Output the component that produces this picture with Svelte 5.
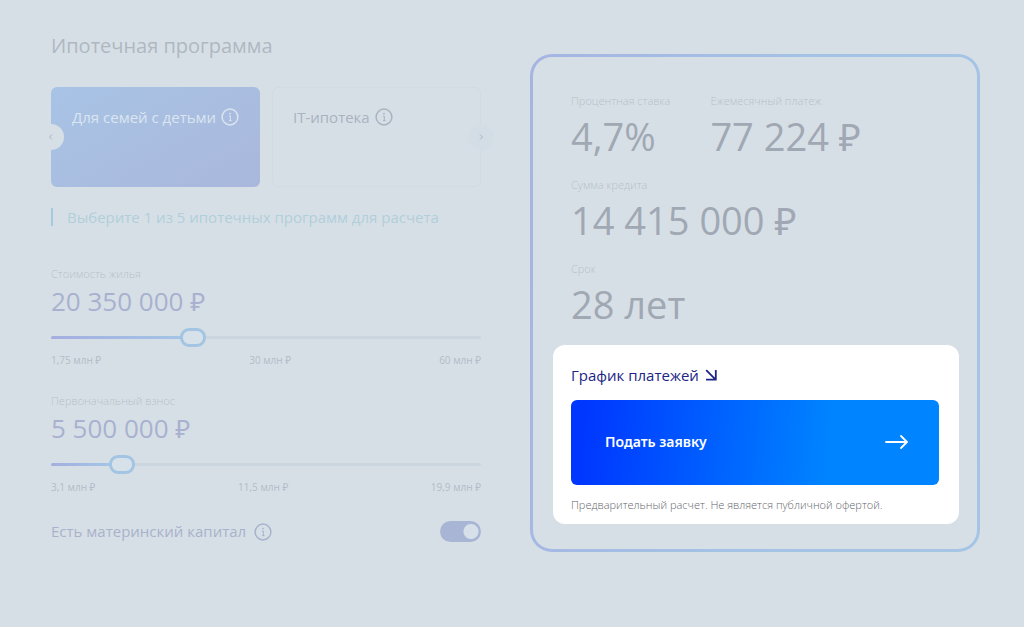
<script>
  const programs = [
    { id: 'family', name: 'Для семей с детьми' },
    { id: 'it', name: 'IT-ипотека' }
  ];

  const results = [
    [
      { label: 'Процентная ставка', value: '4,7%' },
      { label: 'Ежемесячный платеж', value: '77 224 ₽' }
    ],
    [{ label: 'Сумма кредита', value: '14 415 000 ₽' }],
    [{ label: 'Срок', value: '28 лет' }]
  ];

  let selected = $state('family');
  let capital = $state(true);
  let fields = $state([
    {
      id: 'price',
      label: 'Стоимость жилья',
      min: 1750000,
      max: 60000000,
      value: 20350000,
      ticks: ['1,75 млн ₽', '30 млн ₽', '60 млн ₽']
    },
    {
      id: 'deposit',
      label: 'Первоначальный взнос',
      min: 3100000,
      max: 19900000,
      value: 5500000,
      ticks: ['3,1 млн ₽', '11,5 млн ₽', '19,9 млн ₽']
    }
  ]);

  // 20350000 → "20 350 000 ₽"
  function formatPrice(n) {
    return String(n).replace(/\B(?=(\d{3})+$)/g, ' ') + ' ₽';
  }

  function fillPercent(field) {
    return ((field.value - field.min) / (field.max - field.min)) * 100;
  }
</script>

{#snippet infoIcon()}
  <svg class="info" viewBox="0 0 18 18" aria-hidden="true">
    <circle cx="9" cy="9" r="7.9" fill="none" stroke="currentColor" stroke-width="1.5" />
    <path d="M8 8H9.3V13M8 12.7H10.6" fill="none" stroke="currentColor" stroke-width="1" />
    <circle cx="9" cy="5.6" r="0.9" fill="currentColor" />
  </svg>
{/snippet}

<main class="calculator">
  <section class="settings">
    <h2>Ипотечная программа</h2>

    <div class="carousel">
      {#each programs as program (program.id)}
        <button
          class="program"
          class:active={selected === program.id}
          onclick={() => (selected = program.id)}
        >
          <span>{program.name}</span>
          {@render infoIcon()}
        </button>
      {/each}
      <button class="arrow prev" aria-label="Назад">
        <svg viewBox="0 0 8 8"><path d="M5 1.5L2.5 4L5 6.5" /></svg>
      </button>
      <button class="arrow next" aria-label="Вперед">
        <svg viewBox="0 0 8 8"><path d="M3 1.5L5.5 4L3 6.5" /></svg>
      </button>
    </div>

    <p class="hint">Выберите 1 из 5 ипотечных программ для расчета</p>

    {#each fields as field (field.id)}
      <div class="field">
        <label class="caption" for={field.id}>{field.label}</label>
        <output class="amount" for={field.id}>{formatPrice(field.value)}</output>
        <input
          id={field.id}
          type="range"
          min={field.min}
          max={field.max}
          step="50000"
          bind:value={field.value}
          style="--fill: {fillPercent(field)}%"
        />
        <div class="ticks">
          {#each field.ticks as tick}
            <span>{tick}</span>
          {/each}
        </div>
      </div>
    {/each}

    <div class="capital">
      <label for="capital">Есть материнский капитал</label>
      {@render infoIcon()}
      <input id="capital" type="checkbox" bind:checked={capital} />
    </div>
  </section>

  <section class="summary">
    {#each results as row}
      <div class="row">
        {#each row as item}
          <div>
            <div class="caption">{item.label}</div>
            <div class="result">{item.value}</div>
          </div>
        {/each}
      </div>
    {/each}

    <div class="actions">
      <a class="schedule" href="#schedule">
        График платежей
        <svg viewBox="0 0 12 12" aria-hidden="true">
          <path d="M1.2 1.2L10.4 10.4M10.8 1V10.6H1" />
        </svg>
      </a>
      <button class="submit">
        <span>Подать заявку</span>
        <svg viewBox="0 0 24 16" aria-hidden="true">
          <path d="M1 8H22M16 2L22 8L16 14" />
        </svg>
      </button>
      <p class="note">Предварительный расчет. Не является публичной офертой.</p>
    </div>
  </section>
</main>

<style>
  :global(body) {
    margin: 0;
    background: #d7dfe6;
  }

  .calculator {
    display: grid;
    grid-template-columns: 430fr 450fr;
    align-items: start;
    gap: 49px;
    padding: 34px 44px 34px 51px;
    font-family: 'Open Sans', 'Noto Sans', sans-serif;
    color: #a4adb8;
  }

  button,
  input {
    margin: 0;
    font-family: inherit;
  }

  button {
    border: 0;
    cursor: pointer;
  }

  h2 {
    margin: 0 0 29px;
    font-size: 20px;
    font-weight: 400;
    line-height: 24px;
    color: #afb8c1;
  }

  /* Program cards */
  .carousel {
    position: relative;
    display: grid;
    grid-template-columns: repeat(2, minmax(0, 1fr));
    gap: 12px;
  }

  .program {
    display: flex;
    align-items: flex-start;
    gap: 5px;
    height: 100px;
    padding: 19px 20px;
    border: 1px solid #d1dbe3;
    border-radius: 6px;
    background: transparent;
    font-size: 15px;
    line-height: 20px;
    color: #a9b2bf;
    white-space: nowrap;
  }

  .program.active {
    border-color: transparent;
    background: linear-gradient(150deg, #a7c3e6, #a9bfe1 40%, #a9b7dc) border-box;
    color: #dae5f0;
  }

  .info {
    flex-shrink: 0;
    width: 18px;
    height: 18px;
    margin-top: 1px;
  }

  .arrow {
    position: absolute;
    top: 50%;
    display: flex;
    align-items: center;
    justify-content: center;
    width: 26px;
    height: 26px;
    padding: 0;
    border-radius: 50%;
    background: #d7dfe6;
    transform: translateY(-50%);
  }

  .prev {
    left: -13px;
  }

  .next {
    right: -13px;
    background: #d3dde6;
  }

  .arrow svg {
    width: 8px;
    height: 8px;
    fill: none;
    stroke: #a9b4c2;
    stroke-width: 1;
  }

  .hint {
    margin: 21px 0 40px;
    padding-left: 14px;
    border-left: 2px solid #a3cbdf;
    font-size: 15px;
    line-height: 18px;
    color: #b0cfdb;
  }

  /* Sliders */
  .field {
    display: flex;
    flex-direction: column;
    margin-bottom: 25px;
  }

  .caption {
    font-size: 11px;
    font-weight: 300;
    line-height: 16px;
    color: #b5bfc9;
    white-space: nowrap;
  }

  .amount {
    margin: 1px 0 8px;
    font-size: 26px;
    line-height: 36px;
    color: #a8b1d0;
  }

  input[type='range'] {
    width: 100%;
    height: 20px;
    appearance: none;
    background: transparent;
  }

  input[type='range']::-webkit-slider-runnable-track {
    height: 3px;
    border-radius: 2px;
    background:
      linear-gradient(90deg, #a4aee0, #a3c6e6) 0 0 / var(--fill) 100% no-repeat,
      #ccd6df;
  }

  input[type='range']::-webkit-slider-thumb {
    width: 26px;
    height: 19px;
    margin-top: -8px;
    box-sizing: border-box;
    appearance: none;
    border: 3px solid #a3c5e3;
    border-radius: 9px;
    background: #d7e1e9;
  }

  .ticks {
    display: flex;
    justify-content: space-between;
    margin-top: 5px;
    font-size: 10px;
    line-height: 16px;
    color: #b2bcc7;
  }

  .capital {
    display: flex;
    align-items: center;
    gap: 8px;
    font-size: 15px;
    line-height: 22px;
    color: #a8b2cb;
  }

  input[type='checkbox'] {
    width: 41px;
    height: 21px;
    margin-left: auto;
    appearance: none;
    border-radius: 11px;
    background: radial-gradient(circle at 10px 50%, #d7dfe8 7px, #a9b5d5 8px);
  }

  input[type='checkbox']:checked {
    background: radial-gradient(circle at 31px 50%, #d7dfe8 7px, #a9b5d5 8px);
  }

  /* Result panel */
  .summary {
    margin-top: 20px;
    padding: 36px 18px 25px 20px;
    border: 3px solid transparent;
    border-radius: 22px;
    background:
      linear-gradient(#d7dfe6, #d7dfe6) padding-box,
      linear-gradient(100deg, #a6b4e2, #a3c2e5 50%, #a5c5e6) border-box;
  }

  .row {
    display: flex;
    gap: 40px;
    margin-bottom: 16px;
    padding-left: 18px;
  }

  .result {
    margin-top: 3px;
    padding-bottom: 1px;
    font-size: 38px;
    line-height: 48px;
    color: #a0a8b3;
    white-space: nowrap;
  }

  .actions {
    padding: 18px 20px 11px 18px;
    border-radius: 12px;
    background: #ffffff;
  }

  .schedule {
    display: flex;
    align-items: center;
    gap: 6px;
    width: fit-content;
    font-size: 15px;
    line-height: 24px;
    color: #1c2585;
    text-decoration: none;
  }

  .schedule svg {
    width: 12px;
    height: 12px;
    fill: none;
    stroke: currentColor;
    stroke-width: 1.8;
  }

  .submit {
    display: flex;
    align-items: center;
    justify-content: space-between;
    width: 100%;
    height: 85px;
    margin-top: 13px;
    padding: 0 30px 2px 34px;
    border-radius: 6px;
    background: linear-gradient(95deg, #0037ff 4%, #0084ff 70%);
    font-family: 'Noto Sans', 'Open Sans', sans-serif;
    font-size: 14px;
    font-weight: 600;
    color: #ffffff;
  }

  .submit svg {
    width: 24px;
    height: 16px;
    fill: none;
    stroke: currentColor;
    stroke-width: 1.8;
    stroke-linecap: round;
  }

  .note {
    margin: 12px 0 0;
    font-size: 11px;
    font-weight: 300;
    line-height: 16px;
    color: #64676c;
  }
</style>
